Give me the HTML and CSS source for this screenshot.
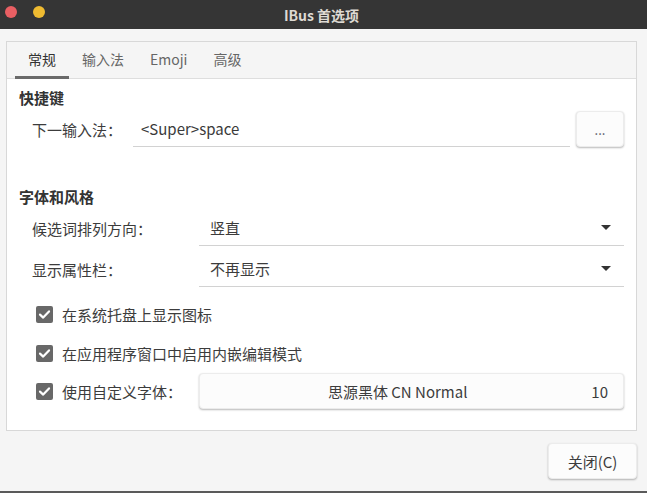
FILE: index.html
```html
<!DOCTYPE html>
<html lang="zh-CN">
<head>
<meta charset="utf-8">
<title>IBus 首选项</title>
<link rel="stylesheet" href="styles.css">
</head>
<body>
<div class="titlebar">
  <div class="dots"><span class="dot red"></span><span class="dot yellow"></span></div>
  <div class="title">IBus 首选项</div>
</div>
<div class="frame">
  <div class="tabs">
    <div class="tab active">常规</div>
    <div class="tab">输入法</div>
    <div class="tab">Emoji</div>
    <div class="tab">高级</div>
  </div>
  <div class="content">
    <div class="section-title">快捷键</div>
    <div class="row shortcut-row">
      <div class="label">下一输入法：</div>
      <div class="entry">&lt;Super&gt;space</div>
      <button class="btn dots-btn">...</button>
    </div>

    <div class="section-title second">字体和风格</div>
    <div class="row combo-row">
      <div class="label wide">候选词排列方向：</div>
      <div class="combo"><span>竖直</span><span class="arrow"></span></div>
    </div>
    <div class="row combo-row next">
      <div class="label wide">显示属性栏：</div>
      <div class="combo"><span>不再显示</span><span class="arrow"></span></div>
    </div>

    <div class="check-row first">
      <span class="check"><svg viewBox="0 0 17 17" width="17" height="17"><path d="M4 8.6 L7.2 11.6 L13 5.4" fill="none" stroke="#fff" stroke-width="2.2" stroke-linecap="round" stroke-linejoin="round"/></svg></span>
      <span class="check-label">在系统托盘上显示图标</span>
    </div>
    <div class="check-row second-check">
      <span class="check"><svg viewBox="0 0 17 17" width="17" height="17"><path d="M4 8.6 L7.2 11.6 L13 5.4" fill="none" stroke="#fff" stroke-width="2.2" stroke-linecap="round" stroke-linejoin="round"/></svg></span>
      <span class="check-label">在应用程序窗口中启用内嵌编辑模式</span>
    </div>
    <div class="check-row third-check">
      <span class="check"><svg viewBox="0 0 17 17" width="17" height="17"><path d="M4 8.6 L7.2 11.6 L13 5.4" fill="none" stroke="#fff" stroke-width="2.2" stroke-linecap="round" stroke-linejoin="round"/></svg></span>
      <span class="check-label font-label">使用自定义字体：</span>
      <button class="btn font-btn"><span class="font-name">思源黑体 CN Normal</span><span class="font-size">10</span></button>
    </div>
  </div>
</div>
<div class="footer">
  <button class="btn close-btn">关闭(C)</button>
</div>
<div class="bottom-edge"></div>
</body>
</html>
```

FILE: styles.css
```css
* { box-sizing: border-box; }
html, body { margin: 0; padding: 0; }
body {
  width: 647px;
  height: 493px;
  background: #f5f5f5;
  font-family: "Noto Sans CJK SC", "Noto Sans", sans-serif;
  font-size: 15px;
  color: #3c3c3c;
  display: flex;
  flex-direction: column;
  overflow: hidden;
}
.titlebar {
  height: 29px;
  background: #353535;
  display: flex;
  align-items: center;
  justify-content: center;
  position: relative;
  flex: none;
}
.dots {
  position: absolute;
  left: 5px;
  top: 6px;
  display: flex;
  gap: 16px;
}
.dot {
  width: 12px;
  height: 12px;
  border-radius: 50%;
  display: block;
}
.red { background: #e95f63; }
.yellow { background: #efbb31; }
.title {
  color: #dedad3;
  font-weight: bold;
  font-size: 14px;
  margin-left: -4px;
}
.frame {
  margin: 12px 10px 0 6px;
  height: 390px;
  border: 1px solid #d8d8d8;
  background: #fff;
  display: flex;
  flex-direction: column;
  flex: none;
}
.tabs {
  height: 37px;
  background: #f5f5f5;
  border-bottom: 1px solid #dedede;
  display: flex;
  padding-left: 8px;
  flex: none;
}
.tab {
  padding: 0 13px;
  height: 36px;
  line-height: 35px;
  color: #666;
  font-size: 14px;
  position: relative;
}
.tab.active { color: #333; }
.tab.active::after {
  content: "";
  position: absolute;
  left: 0;
  right: 0;
  bottom: -1px;
  height: 3px;
  background: #6a6a6a;
}
.content {
  padding: 9px 12px 0 12px;
}
.section-title {
  font-weight: bold;
  line-height: 20px;
  height: 20px;
  color: #333;
}
.section-title.second { margin-top: 40px; }
.row {
  display: flex;
  align-items: center;
  height: 36px;
  margin-top: 3px;
}
.label {
  padding-left: 13px;
  width: 114px;
  flex: none;
}
.label.wide { width: 180px; }
.entry {
  flex: 1;
  height: 36px;
  line-height: 35px;
  border-bottom: 1px solid #d2d2d2;
  padding-left: 8px;
  color: #3a3a3a;
}
.btn {
  font-family: inherit;
  font-size: 15px;
  color: #3c3c3c;
  background: #fcfcfc;
  border: 1px solid #ececec;
  border-radius: 4px;
  box-shadow: 0 1px 2px rgba(0,0,0,0.28);
  padding: 0;
  margin: 0;
}
.dots-btn {
  width: 48px;
  height: 36px;
  margin-left: 6px;
  color: #556;
  font-size: 13px;
  line-height: 1;
}
.combo {
  flex: 1;
  height: 36px;
  border-bottom: 1px solid #d2d2d2;
  display: flex;
  align-items: center;
  justify-content: space-between;
  padding-left: 11px;
  padding-right: 13px;
}
.arrow {
  width: 0;
  height: 0;
  border-left: 5px solid transparent;
  border-right: 5px solid transparent;
  border-top: 5px solid #333;
}
.combo-row.next { margin-top: 5px; }
.check-row {
  display: flex;
  align-items: center;
  height: 36px;
}
.check-row.first { margin-top: 9px; }
.check-row.second-check { margin-top: 3px; }
.check-row.third-check { margin-top: 2px; }
.check {
  width: 17px;
  height: 17px;
  margin-left: 17px;
  border-radius: 2px;
  background: #686868;
  display: flex;
  flex: none;
}
.check-label {
  margin-left: 9px;
}
.font-label {
  width: 137px;
  flex: none;
}
.font-btn {
  flex: 1;
  height: 36px;
  display: flex;
  align-items: center;
  padding: 0 15px 0 8px;
}
.font-name {
  flex: 1;
  text-align: center;
}
.font-size {
  margin-left: 4px;
}
.footer {
  display: flex;
  justify-content: flex-end;
  padding: 12px 10px 0 0;
  flex: none;
}
.close-btn {
  width: 89px;
  height: 36px;
}
.bottom-edge {
  margin-top: auto;
  height: 2px;
  background: #5a5a5a;
  flex: none;
}
```
